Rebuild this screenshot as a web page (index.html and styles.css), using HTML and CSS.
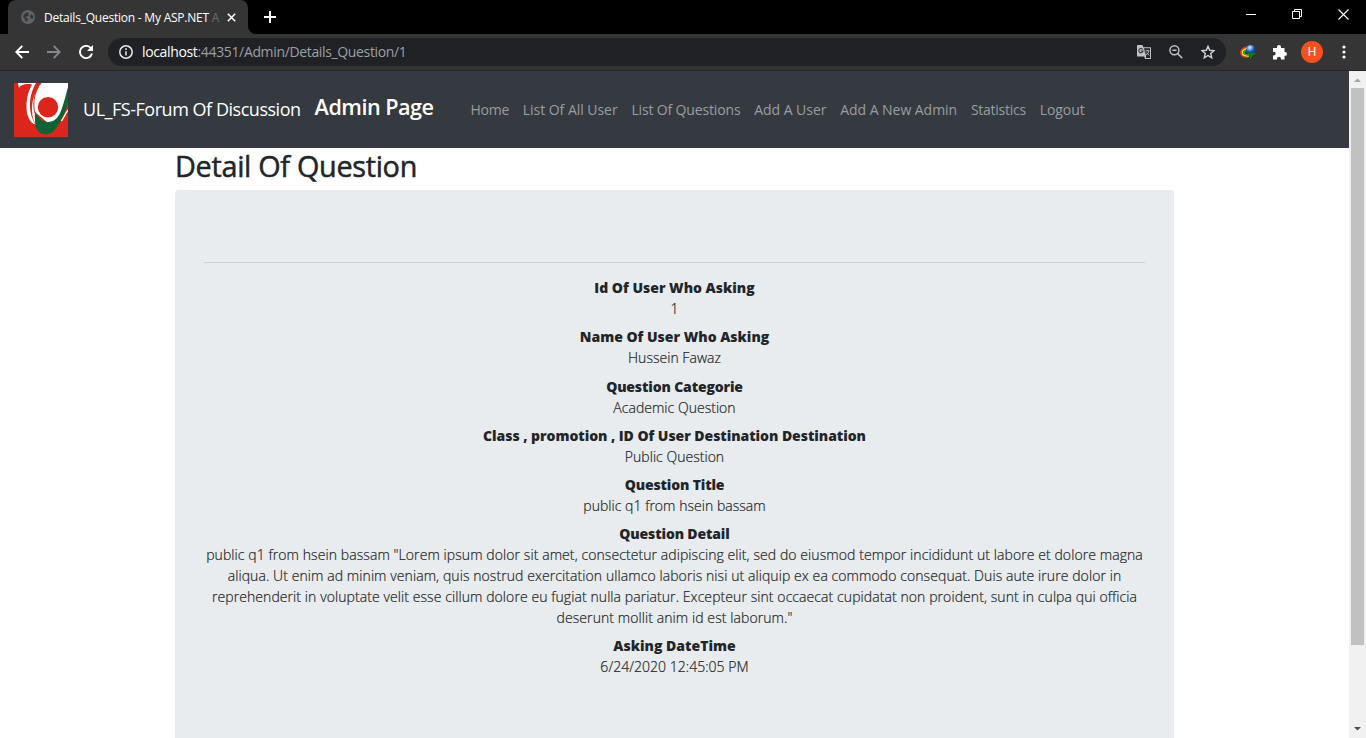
FILE: index.html
```html
<!DOCTYPE html>
<html lang="en">
<head>
<meta charset="utf-8">
<title>Details_Question - My ASP.NET Application</title>
<link rel="stylesheet" href="styles.css">
</head>
<body>
<div class="browser">
  <header class="tabstrip">
    <div class="tab">
      <svg class="globe" width="14" height="14" viewBox="0 0 14 14"><circle cx="7" cy="7" r="7" fill="#5f6368"/><path d="M3 4.500 5 2.500 8 2.500 7 4 8 5.500 5.500 6.500 4.500 7.500 7 8.500 6.500 10.500 5.200 12 4 10 3.300 8 2 6.500zM10 4 12 5.500 12.300 7.500 11 9.500 10 8 9 7z" fill="#353535"/></svg>
      <span class="tab-title">Details_Question - My ASP.NET <span class="fade">A</span></span>
      <svg class="tab-close" width="9" height="9" viewBox="0 0 9 9"><path d="M.8.8l7.400 7.400M8.200.8.8 8.200" stroke="#fff" stroke-width="1.500"/></svg>
    </div>
    <svg class="tab-foot" width="8" height="8" viewBox="0 0 8 8"><path d="M0 0a8 8 0 0 0 8 8H0z" fill="#353535"/></svg>
    <svg class="plus" width="12" height="12" viewBox="0 0 12 12"><path d="M6 0v12M0 6h12" stroke="#fff" stroke-width="2"/></svg>
    <div class="window-buttons">
      <svg width="11" height="11" viewBox="0 0 11 11"><path d="M0 5.500h10" stroke="#fff"/></svg>
      <svg width="11" height="11" viewBox="0 0 11 11"><path d="M.5 2.500h7v7h-7zM2.500 2.500v-2h7v7h-2" fill="none" stroke="#fff"/></svg>
      <svg width="11" height="11" viewBox="0 0 11 11"><path d="M.5.5l10 10M10.500.5l-10 10" stroke="#fff" stroke-width="1.100"/></svg>
    </div>
  </header>
  <div class="toolbar">
    <div class="nav-buttons">
      <svg width="14" height="14" viewBox="0 0 14 14"><path d="M14 7H1.500M7.300.9 1.300 7l6 6.100" fill="none" stroke="#fff" stroke-width="1.900"/></svg>
      <svg width="14" height="14" viewBox="0 0 14 14"><path d="M0 7h12.500M6.700.9l6 6.100-6 6.100" fill="none" stroke="#85878a" stroke-width="1.800"/></svg>
      <svg width="14" height="14" viewBox="0 0 14 14"><path d="M12.100 3.500A6.100 6.100 0 1 0 13 8.500" fill="none" stroke="#fff" stroke-width="1.900"/><path d="M14 0v6H8z" fill="#fff"/></svg>
    </div>
    <div class="address">
      <svg width="14" height="14" viewBox="0 0 14 14"><circle cx="7" cy="7" r="6.200" fill="none" stroke="#e8eaed" stroke-width="1.500"/><path d="M7 6.200v4.300M7 3.300v1.600" stroke="#e8eaed" stroke-width="1.500"/></svg>
      <span class="url"><span class="host">localhost</span>:44351/Admin/Details_Question/1</span>
      <div class="address-icons">
        <svg width="14" height="14" viewBox="0 0 14 14"><path d="M0 0h5.500l.8 2.300H14V14H8L7.200 11.500H0z" fill="#bdc1c6"/><path d="M7 3.300h6v9.700H8.700L9.200 11.500z" fill="#202124"/><path d="M5.600 4.300A2.100 2.100 0 1 0 6 6H4" fill="none" stroke="#303134" stroke-width="1.100"/><path d="M8.500 5.800h4M10.400 4.800v1M11.800 6c-.3 2-1.300 3.200-3 4M9.300 7.500l3 3" fill="none" stroke="#bdc1c6"/></svg>
        <svg width="14" height="14" viewBox="0 0 14 14"><circle cx="5.400" cy="5.300" r="4.500" fill="none" stroke="#bdc1c6" stroke-width="1.500"/><path d="M3.300 5.300h4.200M8.700 8.600l4.600 4.600" stroke="#bdc1c6" stroke-width="1.500"/></svg>
        <svg width="14" height="14" viewBox="0 0 14 14"><path d="M7 1.300l1.700 4 4.300.4-3.300 2.800 1 4.300L7 10.500l-3.700 2.300 1-4.300L1 5.700l4.300-.4z" fill="none" stroke="#d0d3d6" stroke-width="1.400"/></svg>
      </div>
    </div>
    <div class="extensions">
      <svg width="17" height="16" viewBox="0 0 17 16"><defs><radialGradient id="orb" cx=".4" cy=".3"><stop offset="0" stop-color="#f0f7fb"/><stop offset=".45" stop-color="#6da9e8"/><stop offset="1" stop-color="#1445a8"/></radialGradient></defs><path d="M8 3C4 3 .8 5.500.8 8.500S4 13.500 8 13" fill="none" stroke="#e53b18" stroke-width="1.500"/><path d="M8 4.500C5 4.500 2.300 6 2.300 8.500S5 12.300 9 12" fill="none" stroke="#ffd52b" stroke-width="1.600"/><path d="M7 6C5 6.500 4 7.500 4.200 9S6 11 9 11" fill="none" stroke="#27a834" stroke-width="1.500"/><circle cx="10.700" cy="5.500" r="4.600" fill="url(#orb)"/><path d="M6.500 8l10 1.500-4 2.500-2.500 3.500-.500-4z" fill="#078016"/></svg>
      <svg class="puzzle" width="15" height="15" viewBox="0 0 15 15"><path d="M1 3h4V2a2 2 0 0 1 4 0v1h3.500v4h.6a1.900 1.900 0 0 1 0 3.800h-.6V14.500H9v-.8a2 2 0 0 0-4 0v.8H1v-4h.8a1.900 1.900 0 0 0 0-3.800H1z" fill="#fff"/></svg>
      <span class="avatar">H</span>
      <svg width="4" height="14" viewBox="0 0 4 14"><g fill="#fff"><circle cx="2" cy="2" r="1.600"/><circle cx="2" cy="7" r="1.600"/><circle cx="2" cy="12" r="1.600"/></g></svg>
    </div>
  </div>
  <div class="viewport">
    <div class="page">
      <nav class="navbar">
        <svg class="logo" width="54" height="54" viewBox="0 0 54 54"><path d="M0 0h54v54H0z" fill="#db261b"/><path d="M4 0h18c-3.500 6-6 13-6 22 0 8 2 14 5.500 19.500C16 40 12.500 33 12.500 24c0-9 2-16 5.500-22.500C12 .5 7.500 1 5 5z" fill="#fff"/><path d="M27.500 0H54v8L45 36 34 40 22 30l.5 12c-3.500-4-4.500-10-4.500-17C18 16 22 7 27.500 0z" fill="#fff"/><path d="M24.500 3.500C21.500 9 19.800 15 19.800 21c0 4 .5 7 1.200 9" fill="none" stroke="#db261b" stroke-width="1"/><circle cx="34" cy="24.300" r="10.200" fill="#db261b"/><path d="M54 4v15c-2 9-6 17-10 23-3 6-7 9.300-12.500 9.300C25 51.300 21 46 21 38c0-4-.3-7-.2-10.500C23 34 27.500 39 34 39c6 0 10-4 12.500-10C49.500 22 51.500 13 54 4z" fill="#0e6336"/><path d="M54 27c-2.500 3.500-4 7-6.500 11" fill="none" stroke="#fff" stroke-width="1.300"/></svg>
        <a class="brand">UL_FS-Forum Of Discussion</a>
        <a class="admin">Admin Page</a>
        <div class="links">
          <a class="tight">Home</a><a>List Of All User</a><a class="snug">List Of Questions</a><a>Add A User</a><a>Add A New Admin</a><a class="tight">Statistics</a><a>Logout</a>
        </div>
      </nav>
      <main class="container">
        <h2>Detail Of Question</h2>
        <section class="jumbotron">
          <hr>
          <dl>
            <dt>Id Of User Who Asking</dt><dd>1</dd>
            <dt>Name Of User Who Asking</dt><dd>Hussein Fawaz</dd>
            <dt class="snug">Question Categorie</dt><dd>Academic Question</dd>
            <dt class="near">Class , promotion , ID Of User Destination Destination</dt><dd>Public Question</dd>
            <dt class="snug">Question Title</dt><dd>public q1 from hsein bassam</dd>
            <dt class="snug">Question Detail</dt>
            <dd class="long">public q1 from hsein bassam "Lorem ipsum dolor sit amet, consectetur adipiscing elit, sed do eiusmod tempor incididunt ut labore et dolore magna<br>aliqua. Ut enim ad minim veniam, quis nostrud exercitation ullamco laboris nisi ut aliquip ex ea commodo consequat. Duis aute irure dolor in<br>reprehenderit in voluptate velit esse cillum dolore eu fugiat nulla pariatur. Excepteur sint occaecat cupidatat non proident, sunt in culpa qui officia<br>deserunt mollit anim id est laborum."</dd>
            <dt>Asking DateTime</dt><dd>6/24/2020 12:45:05 PM</dd>
          </dl>
        </section>
      </main>
    </div>
    <div class="scrollbar">
      <svg width="17" height="17" viewBox="0 0 17 17"><path d="M5 11h7L8.500 7.500z" fill="#a3a3a3"/></svg>
      <div class="thumb"></div>
      <svg width="17" height="17" viewBox="0 0 17 17"><path d="M5 6h7L8.500 9.500z" fill="#505050"/></svg>
    </div>
  </div>
</div>
</body>
</html>
```
FILE: styles.css
```css
* { box-sizing: border-box; }
body { margin: 0; overflow: hidden; font-family: "Open Sans", "Noto Sans", sans-serif; color: #212529; }
svg { display: block; flex: none; }
.browser { width: 1366px; height: 738px; display: flex; flex-direction: column; overflow: hidden; }
.tabstrip { height: 34px; background: #000; display: flex; flex: none; padding-left: 8px; }
.tab { width: 240px; background: #353535; border-radius: 8px 8px 0 0; display: flex; align-items: center; padding: 0 12px 0 13px; }
.tab-title { width: 176px; margin-left: 9px; white-space: nowrap; font-size: 12px; letter-spacing: -0.22px; color: #fff; }
.fade { color: #6c6c6c; }
.tab-close { margin-left: 8px; }
.tab-foot { align-self: flex-end; }
.plus { margin: 11px 0 0 8px; }
.window-buttons { margin: 9px 17px 0 auto; display: flex; gap: 35px; }
.toolbar { height: 37px; flex: none; background: #353535; border-bottom: 1px solid #242528; display: flex; align-items: center; padding: 0 20px 0 15px; }
.nav-buttons { display: flex; gap: 18px; }
.address { width: 1118px; height: 28px; margin-left: 15px; border-radius: 14px; background: #202124; display: flex; align-items: center; padding: 0 11px; }
.url { font-size: 14px; letter-spacing: -0.35px; margin: 0 0 1px 9px; color: #9aa0a6; white-space: nowrap; }
.host { color: #fff; }
.address-icons { display: flex; gap: 18px; margin-left: auto; }
.extensions { flex: 1; display: flex; align-items: center; margin-left: 14px; }
.puzzle { margin-left: 15px; }
.avatar { width: 22px; height: 22px; border-radius: 50%; background: #f4511e; color: #fff; font: 12px/22px Roboto, sans-serif; text-align: center; margin: 0 auto 0 14px; }
.viewport { flex: 1; display: flex; min-height: 0; }
.page { width: 1349px; background: #fff; overflow: hidden; }
.navbar { height: 77px; background: #343a40; display: flex; align-items: center; padding: 0 14px; white-space: nowrap; }
.brand { color: #fff; font-size: 18px; letter-spacing: -0.47px; margin: 0 0 2px 15px; }
.admin { color: #fff; font-size: 21.600px; letter-spacing: -0.5px; font-weight: 600; margin: 0 0 6px 14px; }
.links { display: flex; gap: 13.800px; margin: 0 0 1px 37px; font-size: 14px; letter-spacing: -0.04px; color: #9a9da0; }
.container { width: 999px; margin: 0 auto; }
h2 { margin: 0; height: 41.760px; padding-top: 1px; font-size: 28.800px; line-height: 34.560px; letter-spacing: -0.3px; font-weight: 400; -webkit-text-stroke: 0.5px #212529; }
.jumbotron { height: 620px; background: #e9ecef; border-radius: 4px; padding: 57.600px 28.800px; text-align: center; font-size: 14px; line-height: 21px; font-weight: 300; white-space: nowrap; }
hr { border: 0; border-top: 1px solid #ced1d4; margin: 14.400px 0; }
dl, dd { margin: 0; }
dt { font-weight: 800; }
dd { margin-bottom: 7.200px; letter-spacing: 0.03px; -webkit-text-stroke: 0.2px #212529; }
.long { letter-spacing: 0.08px; }
.tight { letter-spacing: -0.26px; }
.snug { letter-spacing: -0.15px; }
.near { letter-spacing: -0.05px; }
.scrollbar { width: 17px; background: #f1f1f1; display: flex; flex-direction: column; }
.thumb { width: 13px; height: 557px; margin: 0 auto auto; background: #c1c1c1; }
```
